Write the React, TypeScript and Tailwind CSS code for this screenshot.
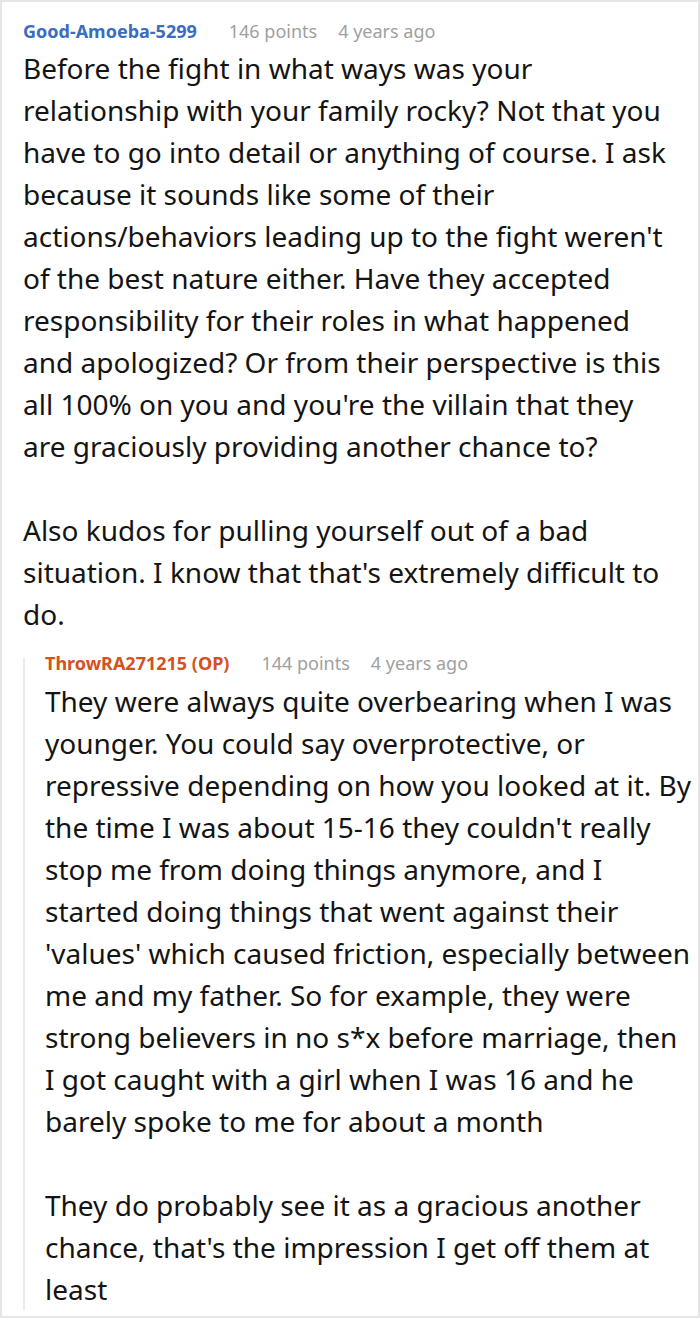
type Meta = { user: string; points: string; age: string; op?: boolean };

function CommentHeader({ meta, tight }: { meta: Meta; tight?: boolean }) {
  return (
    <div
      className={`flex items-baseline text-[18px] ${
        tight ? "leading-[10px]" : "leading-[24px]"
      }`}
    >
      <span className={`font-bold ${meta.op ? "text-[#d4521d]" : "text-[#3a6cc0]"}`}>
        {meta.user}
      </span>
      <span className="ml-[32px] text-[#9f9f9f]">{meta.points}</span>
      <span className="ml-[21px] text-[#9f9f9f]">{meta.age}</span>
    </div>
  );
}

export default function App() {
  return (
    <div className="min-h-screen bg-white font-['Noto_Sans','Open_Sans',sans-serif]">
      <div className="h-[1318px] overflow-hidden border-2 border-[#e6e6e6] bg-white text-[#141414]">
        <div className="pl-[21px] pt-[17px]">
          <CommentHeader
            meta={{ user: "Good-Amoeba-5299", points: "146 points", age: "4 years ago" }}
          />
          <div className="mt-[4px] pr-[21px] text-[28px] leading-[42px]">
            <p>
              Before the fight in what ways was your relationship with your
              family rocky? Not that you have to go into detail or anything of
              course. I ask because it sounds like some of their
              actions/behaviors leading up to the fight weren't of the best
              nature either. Have they accepted responsibility for their roles
              in what happened and apologized? Or from their perspective is
              this all 100% on you and you're the villain that they are
              graciously providing another chance to?
            </p>
            <p className="mt-[42px]">
              Also kudos for pulling yourself out of a bad situation. I know
              that that's extremely difficult to do.
            </p>
          </div>

          <div className="mt-[23px] border-l-2 border-[#ebebeb] pl-[20px]">
            <CommentHeader
              tight
              meta={{
                user: "ThrowRA271215 (OP)",
                points: "144 points",
                age: "4 years ago",
                op: true,
              }}
            />
            <div className="mt-[12px] -mb-[11px] text-[28px] leading-[42px]">
              <p>
                They were always quite overbearing when I was younger. You
                could say overprotective, or repressive depending on how you
                looked at it. By the time I was about 15-16 they couldn't
                really stop me from doing things anymore, and I started doing
                things that went against their 'values' which caused friction,
                especially between me and my father. So for example, they were
                strong believers in no s*x before marriage, then I&nbsp;got
                caught with a girl when I was 16 and he barely spoke to me for
                about a month
              </p>
              <p className="mt-[42px]">
                They do probably see it as a gracious another chance, that's
                the impression I get off them at least
              </p>
            </div>
          </div>
        </div>
      </div>
    </div>
  );
}
